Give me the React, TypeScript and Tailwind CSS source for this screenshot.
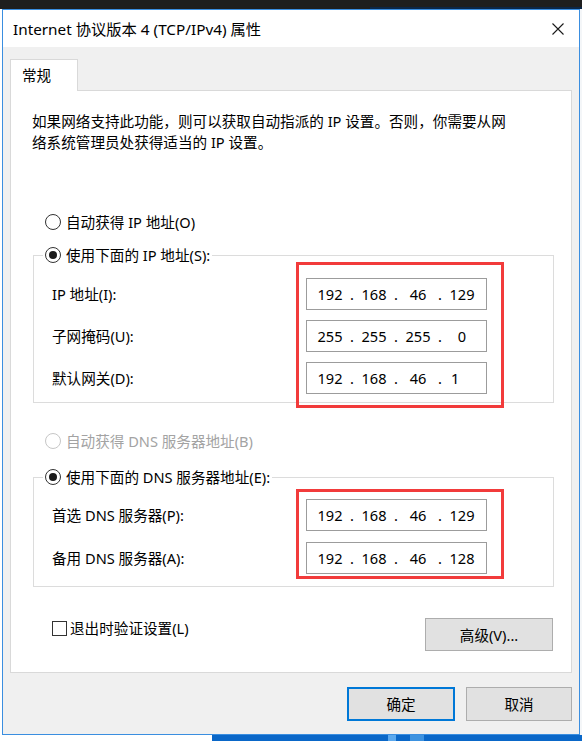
import React from "react";

type Octets = [string, string, string, string];

const ipFields: { label: string; value: Octets; lastLeft?: boolean }[] = [
  { label: "IP 地址(I):", value: ["192", "168", "46", "129"] },
  { label: "子网掩码(U):", value: ["255", "255", "255", "0"] },
  { label: "默认网关(D):", value: ["192", "168", "46", "1"], lastLeft: true },
];

const dnsFields: { label: string; value: Octets }[] = [
  { label: "首选 DNS 服务器(P):", value: ["192", "168", "46", "129"] },
  { label: "备用 DNS 服务器(A):", value: ["192", "168", "46", "128"] },
];

function Radio({ checked, disabled, label }: { checked?: boolean; disabled?: boolean; label: string }) {
  return (
    <div className="flex h-[20px] items-center">
      <span
        className={
          disabled
            ? "flex h-[16px] w-[16px] items-center justify-center rounded-full border border-[#c6c6c6] bg-white"
            : "flex h-[16px] w-[16px] items-center justify-center rounded-full border border-[#333333] bg-white"
        }
      >
        {checked && <span className="h-[8px] w-[8px] rounded-full bg-[#1a1a1a]" />}
      </span>
      <span className={disabled ? "ml-[5px] text-[#a3a3a3]" : "ml-[5px]"}>{label}</span>
    </div>
  );
}

function IpInput({ value, lastLeft }: { value: Octets; lastLeft?: boolean }) {
  return (
    <div className="flex h-[32px] w-[181px] items-center border border-[#9c9c9c] bg-white pl-[8px]">
      <span className="w-[30px] text-center">{value[0]}</span>
      <span className="w-[14px] text-center">.</span>
      <span className="w-[30px] text-center">{value[1]}</span>
      <span className="w-[14px] text-center">.</span>
      <span className="w-[30px] text-center">{value[2]}</span>
      <span className="w-[14px] text-center">.</span>
      <span className={lastLeft ? "w-[30px] pl-[4px] text-left" : "w-[30px] text-center"}>{value[3]}</span>
    </div>
  );
}

export default function App() {
  return (
    <div className="flex h-[741px] w-[582px] flex-col overflow-hidden bg-[#1e1e1e] font-[family-name:'Noto_Sans','Noto_Sans_CJK_SC',sans-serif] text-[14.6px] leading-[20px] text-black">
      {/* desktop strip above window */}
      <div className="h-[7px] shrink-0 bg-[#1e1e1e]" />
      <div className="flex h-[2px] shrink-0">
        <div className="w-[370px] bg-[#1e1e1e]" />
        <div className="flex-1 bg-[#0c2646]" />
      </div>

      <div className="flex shrink-0">
        <div className="w-[2px] bg-white" />
        {/* dialog window */}
        <div className="flex h-[726px] w-[578px] flex-col border border-[#3a8ee0] bg-[#f0f0f0]">
          <div className="flex h-[37px] shrink-0 items-center justify-between bg-white pl-[10px] pr-[15px]">
            <span className="text-[15.3px]">Internet 协议版本 4 (TCP/IPv4) 属性</span>
            <svg width="12" height="12" viewBox="0 0 12 12" fill="none" stroke="#1a1a1a" strokeWidth="1.1">
              <path d="M0.5 0.5 L11.5 11.5 M11.5 0.5 L0.5 11.5" />
            </svg>
          </div>

          <div className="flex flex-1 flex-col px-[7px] pt-[12px]">
            <div className="relative z-10 h-[32px] w-[68px] border-l border-r border-t border-[#d9d9d9] bg-white pl-[11px] pt-[5px]">
              常规
            </div>
            <div className="-mt-[1px] flex flex-col border border-[#d9d9d9] bg-white pb-[21px] pt-[20px]">
              <p className="pl-[21px] leading-[21px]">
                如果网络支持此功能，则可以获取自动指派的 IP 设置。否则，你需要从网
                <br />
                络系统管理员处获得适当的 IP 设置。
              </p>

              <div className="mt-[59px] pl-[34px]">
                <Radio label="自动获得 IP 地址(O)" />
              </div>

              <fieldset className="ml-[22px] mr-[17px] mt-[13px] border border-[#dcdcdc]">
                <legend className="ml-[9px] px-[2px]">
                  <Radio checked label="使用下面的 IP 地址(S):" />
                </legend>
                <div className="flex">
                  <div className="flex w-[262px] flex-col gap-[10px] pl-[18px] pt-[13px]">
                    {ipFields.map((f) => (
                      <div key={f.label} className="flex h-[32px] items-center">
                        {f.label}
                      </div>
                    ))}
                  </div>
                  <div className="-mb-[6px] -mt-[3px] flex w-[208px] flex-col gap-[10px] border-[3px] border-[#f23b3b] pb-[11px] pl-[7px] pt-[13px]">
                    {ipFields.map((f) => (
                      <IpInput key={f.label} value={f.value} lastLeft={f.lastLeft} />
                    ))}
                  </div>
                </div>
              </fieldset>

              <div className="mt-[28px] pl-[34px]">
                <Radio disabled label="自动获得 DNS 服务器地址(B)" />
              </div>

              <fieldset className="ml-[22px] mr-[17px] mt-[16px] border border-[#dcdcdc] pb-[7px]">
                <legend className="ml-[9px] px-[2px]">
                  <Radio checked label="使用下面的 DNS 服务器地址(E):" />
                </legend>
                <div className="flex">
                  <div className="flex w-[262px] flex-col gap-[11px] pl-[18px] pt-[12px]">
                    {dnsFields.map((f) => (
                      <div key={f.label} className="flex h-[32px] items-center">
                        {f.label}
                      </div>
                    ))}
                  </div>
                  <div className="mt-[2px] flex w-[208px] flex-col gap-[11px] border-[3px] border-[#f23b3b] pb-[2px] pl-[7px] pt-[7px]">
                    {dnsFields.map((f) => (
                      <IpInput key={f.label} value={f.value} />
                    ))}
                  </div>
                </div>
              </fieldset>

              <div className="mt-[31px] flex items-start justify-between pl-[41px] pr-[18px]">
                <label className="flex h-[20px] items-center">
                  <span className="h-[15px] w-[15px] border border-[#333333] bg-white" />
                  <span className="ml-[3px]">退出时验证设置(L)</span>
                </label>
                <button className="h-[33px] w-[128px] border border-[#adadad] bg-[#e1e1e1]">高级(V)...</button>
              </div>
            </div>

            <div className="mt-[14px] flex justify-end gap-[11px]">
              <button className="h-[34px] w-[108px] border-2 border-[#0078d7] bg-[#e1e1e1]">确定</button>
              <button className="h-[34px] w-[106px] border border-[#adadad] bg-[#e1e1e1]">取消</button>
            </div>
          </div>
        </div>
        <div className="flex-1 bg-[#f4f6f8]" />
      </div>

      {/* desktop strip below window */}
      <div className="flex h-[6px] shrink-0">
        <div className="w-[212px] bg-white" />
        <div className="w-[176px] bg-[#0a67c8]" />
        <div className="w-[8px] bg-[#5aa8ee]" />
        <div className="w-[14px] bg-[#0a67c8]" />
        <div className="w-[14px] bg-[#3d92e0]" />
        <div className="flex-1 bg-[#0a67c8]" />
      </div>
    </div>
  );
}
